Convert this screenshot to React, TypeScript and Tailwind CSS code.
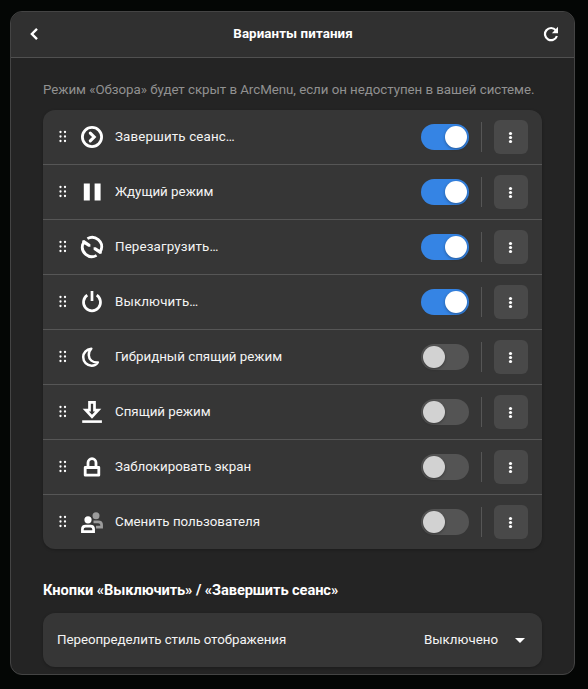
import type { ReactNode } from "react";

const svgBase = "block size-[22px] shrink-0 overflow-visible text-white";

function LogoutIcon() {
  return (
    <svg className={svgBase} viewBox="0 0 22 22" fill="none" stroke="currentColor">
      <circle cx="11" cy="11" r="9.6" strokeWidth="2.8" />
      <path d="M9.300 7.100 13.200 11l-3.900 3.900" strokeWidth="3.100" strokeLinecap="round" />
    </svg>
  );
}

function PauseIcon() {
  return (
    <svg className={svgBase} viewBox="0 0 22 22" fill="currentColor">
      <path d="M2.8 2.6h6v16.8h-6zM13.6 2.6h6v16.8h-6z" />
    </svg>
  );
}

function RestartIcon() {
  return (
    <svg className={svgBase} viewBox="0 0 22 22" fill="none" stroke="currentColor" strokeWidth="2.8">
      <path d="M6.400 2.600A9.600 9.600 0 0 1 20.100 14.200" />
      <path d="M15.600 19.400A9.600 9.600 0 0 1 1.900 7.800" />
      <path d="M1.300 4.600 3.200 4 9.400 8.300v2.400H7.300L3.800 8.400.8 9z" fill="currentColor" stroke="none" />
      <path d="M20.700 17.400l-1.900.6-6.200-4.300v-2.400h2.100l3.500 2.300 3-.6z" fill="currentColor" stroke="none" />
    </svg>
  );
}

function PowerIcon() {
  return (
    <svg className={svgBase} viewBox="0 0 22 22" fill="none" stroke="currentColor" strokeWidth="2.7">
      <path d="M6.3 4.2a8.5 8.5 0 1 0 9.4 0" />
      <path d="M11 0v10" />
    </svg>
  );
}

function MoonIcon() {
  return (
    <svg className={svgBase} viewBox="0 0 22 22" fill="none" stroke="currentColor" strokeWidth="2.500" strokeLinejoin="round">
      <path d="M10.300 2.700C5.200 3.300 2.200 7.100 2.200 11.100c0 4.900 3.600 8.600 8.400 8.600 2.700 0 4.800-1.100 6.200-3.300-5.300.300-8.800-2.600-9-7.200-.1-2.600.7-4.700 2.500-6.500z" />
    </svg>
  );
}

function DownloadIcon() {
  return (
    <svg className={svgBase} viewBox="0 0 22 22" fill="none" stroke="currentColor">
      <path d="M8.500 1.400h5v7.700h3.700L11 15.700 4.800 9.100h3.700z" strokeWidth="2.700" />
      <path d="M1.200 20.600h19.700" strokeWidth="2.600" />
    </svg>
  );
}

function LockIcon() {
  return (
    <svg className={svgBase} viewBox="0 0 22 22" fill="none" stroke="currentColor" strokeWidth="2.800">
      <path d="M4.200 11.500h13.600v7.700H4.200z" strokeLinejoin="round" />
      <path d="M7 11.500V6.700a4 4 0 0 1 8 0v4.800" />
    </svg>
  );
}

function UsersIcon() {
  return (
    <svg className={svgBase} viewBox="0 0 22 22" fill="none" stroke="currentColor" strokeWidth="2.700">
      <g opacity=".5">
        <circle cx="15" cy="4.700" r="3.500" fill="currentColor" stroke="none" />
        <path d="M12.500 10.800h4.700c2.200 0 3.400 1.200 3.400 3v2.400H15" />
      </g>
      <circle cx="7" cy="8.800" r="3.600" fill="currentColor" stroke="none" />
      <path d="M1.400 20.600v-2.300c0-2 1.200-3.100 3.200-3.100h4.800c2 0 3.200 1.100 3.200 3.100v2.300z" />
    </svg>
  );
}

interface PowerOption {
  label: string;
  icon: ReactNode;
  enabled: boolean;
}

const options: PowerOption[] = [
  { label: "Завершить сеанс…", icon: <LogoutIcon />, enabled: true },
  { label: "Ждущий режим", icon: <PauseIcon />, enabled: true },
  { label: "Перезагрузить…", icon: <RestartIcon />, enabled: true },
  { label: "Выключить…", icon: <PowerIcon />, enabled: true },
  { label: "Гибридный спящий режим", icon: <MoonIcon />, enabled: false },
  { label: "Спящий режим", icon: <DownloadIcon />, enabled: false },
  { label: "Заблокировать экран", icon: <LockIcon />, enabled: false },
  { label: "Сменить пользователя", icon: <UsersIcon />, enabled: false },
];

function Grip() {
  return (
    <svg className="mr-3 block h-4 w-2.5 shrink-0 fill-white" viewBox="0 0 10 16">
      {[3, 7.5, 12].map((y) => (
        <g key={y}>
          <circle cx="2.500" cy={y} r="1.150" />
          <circle cx="7" cy={y} r="1.150" />
        </g>
      ))}
    </svg>
  );
}

function Toggle({ on }: { on: boolean }) {
  return (
    <button
      role="switch"
      aria-checked={on}
      className={`flex h-[26px] w-12 shrink-0 items-center rounded-full p-0.5 ${on ? "justify-end bg-[#3584e4]" : "justify-start bg-[#545454]"}`}
    >
      <span className={`size-[22px] rounded-full shadow-[0_1px_3px_rgba(0,0,0,0.35)] ${on ? "bg-white" : "bg-[#d2d2d2]"}`} />
    </button>
  );
}

function OptionRow({ option }: { option: PowerOption }) {
  const tracking = option.label.endsWith("…") ? "tracking-[0.14px]" : "tracking-[-0.01px]";
  return (
    <li className="flex h-[55px] items-center border-b border-[#565656] pr-3.5 pl-[15px] last:h-[54px] last:border-b-0">
      <Grip />
      <span className="ml-px">{option.icon}</span>
      <span className={`ml-3 flex-1 ${tracking}`}>{option.label}</span>
      <Toggle on={option.enabled} />
      <span className="mx-3 h-[30px] w-px bg-[#565656]" />
      <button className="flex size-[34px] items-center justify-center rounded-md bg-[#494949]">
        <svg className="size-4 fill-white" viewBox="0 0 16 16">
          <circle cx="7.500" cy="4.500" r="1.600" />
          <circle cx="7.500" cy="8.500" r="1.600" />
          <circle cx="7.500" cy="12.500" r="1.600" />
        </svg>
      </button>
    </li>
  );
}

export default function App() {
  return (
    <div className="h-[689px] w-[588px] bg-[#040605] px-2.5 pt-[11px] font-[Roboto,sans-serif] text-[13.333px] leading-4 text-[#f4f4f4]">
      <main className="h-[664px] w-[565px] overflow-hidden rounded-xl border border-[#444] bg-[#242424]">
        <header className="flex h-[46px] items-center border-b border-[#505050] bg-[#303030] pr-[15px] pb-0.5 pl-4 text-white">
          <svg className="size-4" viewBox="0 0 16 16" fill="none" stroke="currentColor" strokeWidth="2.400">
            <path d="M10 2.900 4.900 8l5.100 5.100" />
          </svg>
          <h1 className="flex-1 text-center font-bold tracking-[0.09px]">Варианты питания</h1>
          <svg className="size-4" viewBox="0 0 16 16" fill="none" stroke="currentColor" strokeWidth="2.200">
            <path d="M13.900 10A6.100 6.100 0 1 1 12.800 4.200" />
            <path d="M15 .8v6.400H8.900z" fill="currentColor" stroke="none" />
          </svg>
        </header>
        <div className="px-8 pt-6">
          <p className="whitespace-nowrap tracking-[-0.05px] text-[#919191]">
            Режим «Обзора» будет скрыт в ArcMenu, если он недоступен в вашей системе.
          </p>
          <ul className="mt-3 h-[439px] w-[499px] rounded-xl bg-[#363636] shadow-[0_1px_3px_rgba(0,0,0,0.25)]">
            {options.map((option) => (
              <OptionRow key={option.label} option={option} />
            ))}
          </ul>
          <h2 className="mt-8 text-[14.667px] leading-[18px] font-bold tracking-[-0.1px] text-white">
            Кнопки «Выключить» / «Завершить сеанс»
          </h2>
          <div className="mt-3.5 flex h-[54px] w-[499px] items-center justify-between rounded-xl bg-[#363636] px-3.5 shadow-[0_1px_3px_rgba(0,0,0,0.25)]">
            <span className="tracking-[-0.05px]">Переопределить стиль отображения</span>
            <button className="flex items-center gap-3.5">
              <span>Выключено</span>
              <svg className="size-4 fill-white" viewBox="0 0 16 16">
                <path d="M3 6h10l-5 5z" />
              </svg>
            </button>
          </div>
        </div>
      </main>
    </div>
  );
}
